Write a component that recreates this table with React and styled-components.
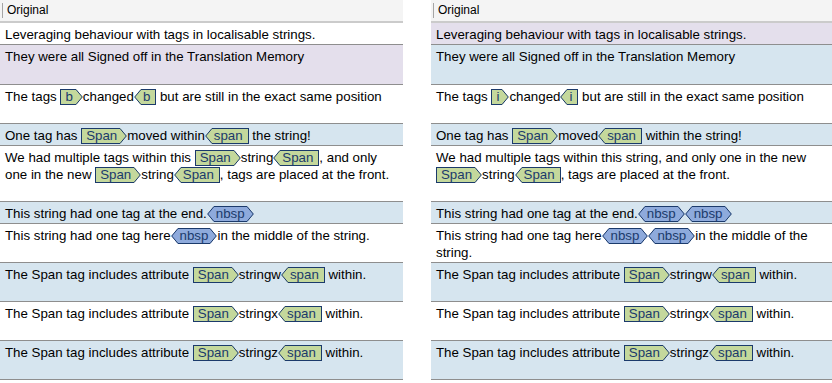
import React from "react";
import styled, { createGlobalStyle } from "styled-components";

const GlobalStyle = createGlobalStyle`
  html, body {
    margin: 0;
    padding: 0;
    background: #fff;
  }
  body {
    font-family: "Liberation Sans", Arial, sans-serif;
    color: #000;
  }
`;

const GREEN = "#c4d89c";
const BLUE = "#8eaadc";
const NAVY = "#1b3a6b";

const Page = styled.div`
  display: flex;
  gap: 28px;
  width: 832px;
`;

const Panel = styled.div`
  display: flex;
  flex-direction: column;
  width: ${(p) => p.$width}px;
`;

const Header = styled.div`
  height: 21px;
  background: #f4f4f4;
  border-bottom: 2px solid #cbcbcb;
  display: flex;
  align-items: center;
`;

const HeaderLabel = styled.span`
  margin-left: 2px;
  padding-left: 4px;
  border-left: 1px solid #a5a5a5;
  font-size: 12px;
  line-height: 15px;
  color: #000;
`;

const Row = styled.div`
  height: ${(p) => p.$h}px;
  box-sizing: border-box;
  background: ${(p) => p.$bg};
  border-bottom: 1px solid #8e8e8e;
  padding: 3px 6px 0 5px;
  font-size: 13.3px;
  line-height: 17px;
  overflow: hidden;
`;

const TagWrap = styled.span`
  display: inline-flex;
  height: 16px;
  vertical-align: baseline;
`;

const TagBody = styled.span`
  align-self: baseline;
  background: ${(p) => p.$fill};
  color: ${NAVY};
  border: 1px solid ${NAVY};
  border-left-width: ${(p) => (p.$left ? 1 : 0)}px;
  border-right-width: ${(p) => (p.$right ? 1 : 0)}px;
  padding: 0 ${(p) => p.$pr}px 0 ${(p) => p.$pl}px;
  line-height: 14px;
  height: 14px;
`;

const PointSvg = styled.svg`
  align-self: flex-start;
  display: block;
  flex: none;
`;

function Point({ dir, fill }) {
  const poly = dir === "right" ? "0,0 6.5,8 0,16" : "7,0 0.5,8 7,16";
  const line =
    dir === "right" ? "0,0.5 6.3,8 0,15.5" : "7,0.5 0.7,8 7,15.5";
  return (
    <PointSvg width="7" height="16" viewBox="0 0 7 16">
      <polygon points={poly} fill={fill} />
      <polyline points={line} fill="none" stroke={NAVY} strokeWidth="1" />
    </PointSvg>
  );
}

function OpenTag({ label }) {
  return (
    <TagWrap>
      <TagBody $fill={GREEN} $left $pl={4} $pr={3}>
        {label}
      </TagBody>
      <Point dir="right" fill={GREEN} />
    </TagWrap>
  );
}

function CloseTag({ label }) {
  return (
    <TagWrap>
      <Point dir="left" fill={GREEN} />
      <TagBody $fill={GREEN} $right $pl={2} $pr={5}>
        {label}
      </TagBody>
    </TagWrap>
  );
}

function NbspTag() {
  return (
    <TagWrap>
      <Point dir="left" fill={BLUE} />
      <TagBody $fill={BLUE} $pl={2} $pr={2}>
        nbsp
      </TagBody>
      <Point dir="right" fill={BLUE} />
    </TagWrap>
  );
}

const WHITE = "#ffffff";
const LAV = "#e4dfec";
const SKY = "#d6e5ef";

const rows = [
  {
    h: 22,
    bg: [WHITE, LAV],
    left: <>Leveraging behaviour with tags in localisable strings.</>,
    right: <>Leveraging behaviour with tags in localisable strings.</>,
  },
  {
    h: 40,
    bg: [LAV, SKY],
    left: <>They were all Signed off in the Translation Memory</>,
    right: <>They were all Signed off in the Translation Memory</>,
  },
  {
    h: 39,
    bg: [WHITE, WHITE],
    left: (
      <>
        The tags <OpenTag label="b" />changed<CloseTag label="b" /> but are still in
        the exact same position
      </>
    ),
    right: (
      <>
        The tags <OpenTag label="i" />changed<CloseTag label="i" /> but are still in
        the exact same position
      </>
    ),
  },
  {
    h: 22,
    bg: [SKY, SKY],
    left: (
      <>
        One tag has <OpenTag label="Span" />moved within<CloseTag label="span" /> the
        string!
      </>
    ),
    right: (
      <>
        One tag has <OpenTag label="Span" />moved<CloseTag label="span" /> within the
        string!
      </>
    ),
  },
  {
    h: 56,
    bg: [WHITE, WHITE],
    left: (
      <>
        We had multiple tags within this <OpenTag label="Span" />string
        <CloseTag label="Span" />, and only one in the new <OpenTag label="Span" />
        string<CloseTag label="Span" />, tags are placed at the front.
      </>
    ),
    right: (
      <>
        We had multiple tags within this string, and only one in the new{" "}
        <OpenTag label="Span" />string<CloseTag label="Span" />, tags are placed at
        the front.
      </>
    ),
  },
  {
    h: 22,
    bg: [SKY, SKY],
    left: (
      <>
        This string had one tag at the end.<NbspTag />
      </>
    ),
    right: (
      <>
        This string had one tag at the end.<NbspTag />
        <NbspTag />
      </>
    ),
  },
  {
    h: 39,
    bg: [WHITE, WHITE],
    left: (
      <>
        This string had one tag here<NbspTag />in the middle of the string.
      </>
    ),
    right: (
      <>
        This string had one tag here<NbspTag />
        <NbspTag />in the middle of the string.
      </>
    ),
  },
  ...["w", "x", "z"].map((ch, i) => ({
    h: 39,
    bg: i % 2 === 0 ? [SKY, SKY] : [WHITE, WHITE],
    left: (
      <>
        The Span tag includes attribute <OpenTag label="Span" />string{ch}
        <CloseTag label="span" /> within.
      </>
    ),
    right: (
      <>
        The Span tag includes attribute <OpenTag label="Span" />string{ch}
        <CloseTag label="span" /> within.
      </>
    ),
  })),
];

export default function App() {
  return (
    <>
      <GlobalStyle />
      <Page>
        {[0, 1].map((side) => (
          <Panel key={side} $width={side === 0 ? 403 : 401}>
            <Header>
              <HeaderLabel>Original</HeaderLabel>
            </Header>
            {rows.map((r, i) => (
              <Row key={i} $h={r.h} $bg={r.bg[side]}>
                {side === 0 ? r.left : r.right}
              </Row>
            ))}
          </Panel>
        ))}
      </Page>
    </>
  );
}
